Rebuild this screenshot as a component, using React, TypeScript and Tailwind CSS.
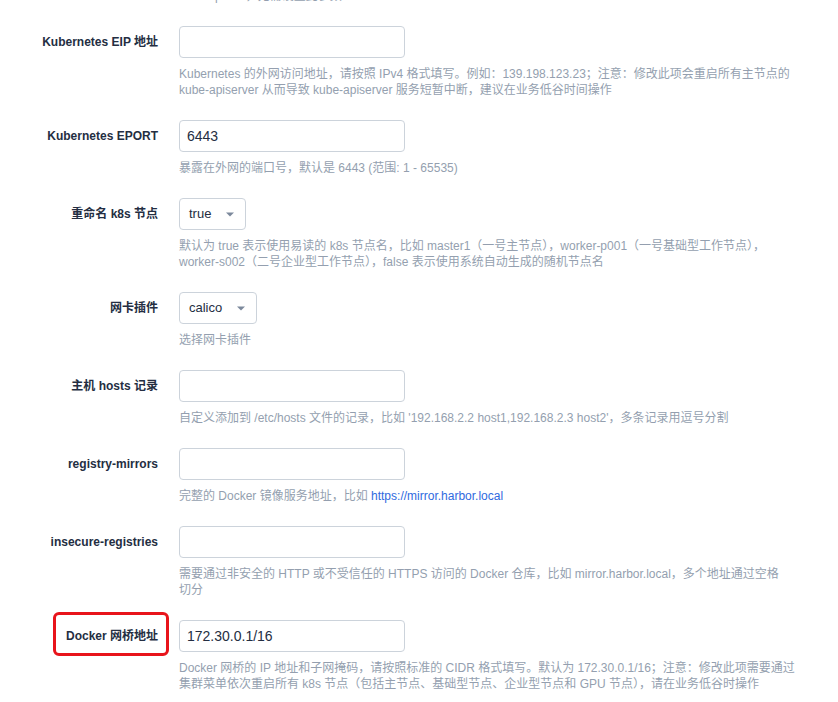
import type { ReactNode } from "react";

const font = {
  fontFamily: '"Liberation Sans", "Noto Sans CJK SC", sans-serif',
};

function Caret() {
  return (
    <svg width="8" height="5" viewBox="0 0 8 5" className="shrink-0">
      <path d="M0 0.5 L8 0.5 L4 4.5 Z" fill="#7c899c" />
    </svg>
  );
}

function TextInput({ value }: { value?: string }) {
  return (
    <div className="flex h-8 w-[226px] items-center rounded-[4px] border border-[#ccd3db] bg-white pl-[7px] text-[14px] text-[#242e42]">
      {value}
    </div>
  );
}

function Select({ value }: { value: string }) {
  return (
    <div className="inline-flex h-8 items-center gap-[15px] rounded-[4px] border border-[#ccd3db] bg-white pl-[9px] pr-[11px] text-[13px] text-[#242e42]">
      <span>{value}</span>
      <Caret />
    </div>
  );
}

function Desc({ lines }: { lines: ReactNode[] }) {
  return (
    <div className="mt-2 text-[12px] leading-[16px] text-[#949faf]">
      {lines.map((l, i) => (
        <div key={i} className="whitespace-nowrap">
          {l}
        </div>
      ))}
    </div>
  );
}

function Row({
  label,
  control,
  desc,
  marked,
}: {
  label: string;
  control: ReactNode;
  desc: ReactNode[];
  marked?: boolean;
}) {
  return (
    <div className="mb-[22px] flex">
      <div className="flex h-8 w-[158px] shrink-0 items-center justify-end">
        <span className="relative text-[12px] font-bold leading-8 text-[#242e42]">
          {label}
          {marked && (
            <span className="absolute -top-[8px] -bottom-[4px] -left-[13px] -right-[11px] rounded-[6px] border-[3px] border-[#e8141b]" />
          )}
        </span>
      </div>
      <div className="ml-[21px]">
        {control}
        <Desc lines={desc} />
      </div>
    </div>
  );
}

export default function App() {
  return (
    <div className="min-h-screen overflow-hidden bg-white" style={font}>
      <div className="-mt-[12px]">
        <div className="mb-[22px] ml-[179px] text-[12px] leading-[16px] text-[#949faf]">
          KubeSphere，无需设置此参数
        </div>

        <Row
          label="Kubernetes EIP 地址"
          control={<TextInput />}
          desc={[
            "Kubernetes 的外网访问地址，请按照 IPv4 格式填写。例如：139.198.123.23；注意：修改此项会重启所有主节点的",
            "kube-apiserver 从而导致 kube-apiserver 服务短暂中断，建议在业务低谷时间操作",
          ]}
        />
        <Row
          label="Kubernetes EPORT"
          control={<TextInput value="6443" />}
          desc={["暴露在外网的端口号，默认是 6443 (范围: 1 - 65535)"]}
        />
        <Row
          label="重命名 k8s 节点"
          control={<Select value="true" />}
          desc={[
            "默认为 true 表示使用易读的 k8s 节点名，比如 master1（一号主节点），worker-p001（一号基础型工作节点），",
            "worker-s002（二号企业型工作节点），false 表示使用系统自动生成的随机节点名",
          ]}
        />
        <Row
          label="网卡插件"
          control={<Select value="calico" />}
          desc={["选择网卡插件"]}
        />
        <Row
          label="主机 hosts 记录"
          control={<TextInput />}
          desc={[
            "自定义添加到 /etc/hosts 文件的记录，比如 '192.168.2.2 host1,192.168.2.3 host2'，多条记录用逗号分割",
          ]}
        />
        <Row
          label="registry-mirrors"
          control={<TextInput />}
          desc={[
            <>
              完整的 Docker 镜像服务地址，比如{" "}
              <span className="text-[#2f6ae0]">https://mirror.harbor.local</span>
            </>,
          ]}
        />
        <Row
          label="insecure-registries"
          control={<TextInput />}
          desc={[
            "需要通过非安全的 HTTP 或不受信任的 HTTPS 访问的 Docker 仓库，比如 mirror.harbor.local，多个地址通过空格",
            "切分",
          ]}
        />
        <Row
          label="Docker 网桥地址"
          marked
          control={<TextInput value="172.30.0.1/16" />}
          desc={[
            "Docker 网桥的 IP 地址和子网掩码，请按照标准的 CIDR 格式填写。默认为 172.30.0.1/16；注意：修改此项需要通过",
            "集群菜单依次重启所有 k8s 节点（包括主节点、基础型节点、企业型节点和 GPU 节点），请在业务低谷时操作",
          ]}
        />
      </div>
    </div>
  );
}
